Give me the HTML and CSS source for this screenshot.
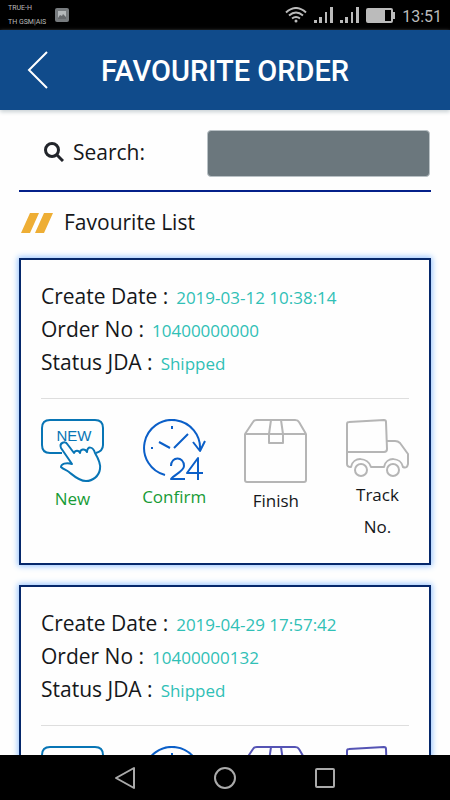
FILE: index.html
```html
<!DOCTYPE html>
<html lang="en">
<head>
<meta charset="utf-8">
<meta name="viewport" content="width=device-width, initial-scale=1">
<title>Favourite Order</title>
<link rel="stylesheet" href="styles.css">
</head>
<body>
<svg class="sprite" aria-hidden="true">
  <symbol id="i-new" viewBox="0 0 63 64">
    <path d="M21 34H9q-8 0-8-8V9q0-8 8-8h45q8 0 8 8v17q0 6-7 8"/>
    <path d="M20 29c-2-5 4-8 7-3l6 8c1-3 5-3 6 0 0-4 5-5 7-1 0-6 6-6 8 1 3 5 6 11 5 16-1 7-7 12-14 12-7 0-12-5-17-9-3-2-6-3-8-5 0-3 5-5 11-3z"/>
    <text x="33" y="22" text-anchor="middle">NEW</text>
  </symbol>
  <symbol id="i-clock" viewBox="0 0 63 62">
    <path d="M22 56A28 28 0 1 1 57 31M50 23l7 9 5-10M29 7v3M8 29h2M16 23l11 6M31 29l14-14"/>
    <path d="M28 47c0-10 13-10 13 0 0 5-10 9-13 13h14M55 61V39L44 54h16"/>
  </symbol>
  <symbol id="i-box" viewBox="0 0 63 66">
    <path d="M1 15h61v46q0 2-2 2H3q-2 0-2-2zL9 3q1-2 4-2h38q3 0 4 2l7 12M27 1l-2 14v9h14v-9L37 1"/>
  </symbol>
  <symbol id="i-truck" viewBox="0 0 63 60">
    <path d="M1 33V5q0-2 2-2l35-2q2 0 2 2l1 27q0 3-3 3zv12q0 3 4 3C7 37 22 38 25 48h13C40 37 55 38 57 48q4 2 5-3V35L54 24q-2-2-5-2h-8"/>
    <circle cx="15" cy="51" r="6"/><circle cx="47" cy="51" r="6"/>
  </symbol>
  <symbol id="i-signal" viewBox="0 0 19 16">
    <path d="M0 13h3v3H0zM5 10h3v6H5zM11 5h2v11h-2zM16 0h3v16h-3z"/>
  </symbol>
</svg>

<div class="status">
  <div class="carrier"><div>TRUE-H</div><div>TH GSM|AIS</div></div>
  <svg class="shot" viewBox="0 0 14 14"><rect width="14" height="14" rx="2" fill="#777b7e"/><rect x="3" y="3" width="8" height="8" fill="#b5b9bb"/><path d="M3 10l2-3 2 1 1-2 3 3v2H3z" fill="#66696c"/></svg>
  <svg class="wifi" viewBox="0 0 22 16"><path d="M1 5.500q10-9 20 0M4 8.500q7-6 14 0M7 11.500q4-3 8 0"/><circle cx="11" cy="14" r="1.500"/></svg>
  <svg class="signal" viewBox="0 0 19 16"><use href="#i-signal"/></svg>
  <svg class="signal" viewBox="0 0 19 16"><use href="#i-signal"/></svg>
  <svg class="battery" viewBox="0 0 29 15"><rect x="1" y="1" width="25" height="13" rx="1" fill="none" stroke="#bbb" stroke-width="2"/><path d="M2 2h17v11H2zM26 4h3v7h-3z" fill="#bbb"/></svg>
  <time>13:51</time>
</div>

<header class="bar">
  <button class="back" aria-label="Back"><svg viewBox="0 0 22 40"><path d="M20 2L2 20l18 18"/></svg></button>
  <h1>FAVOURITE ORDER</h1>
</header>

<main>
  <form class="search">
    <label for="q"><svg viewBox="0 0 20 20"><circle cx="8" cy="8" r="6.500"/><path d="M13 13l6 6"/></svg>Search:</label>
    <input id="q" type="search">
  </form>
  <h2><svg viewBox="0 0 32 20"><path d="M9 0h9L9 20H0zM23 0h9l-9 20h-9z"/></svg>Favourite List</h2>

  <article class="card">
    <dl>
      <div><dt>Create Date :</dt><dd>2019-03-12 10:38:14</dd></div>
      <div><dt>Order No :</dt><dd>10400000000</dd></div>
      <div><dt>Status JDA :</dt><dd>Shipped</dd></div>
    </dl>
    <div class="steps">
      <button class="done"><svg class="new" viewBox="0 0 63 64"><use href="#i-new"/></svg>New</button>
      <button class="done"><svg class="clock" viewBox="0 0 63 62"><use href="#i-clock"/></svg>Confirm</button>
      <button><svg viewBox="0 0 63 66"><use href="#i-box"/></svg>Finish</button>
      <button><svg viewBox="0 0 63 60"><use href="#i-truck"/></svg>Track No.</button>
    </div>
  </article>

  <article class="card">
    <dl>
      <div><dt>Create Date :</dt><dd>2019-04-29 17:57:42</dd></div>
      <div><dt>Order No :</dt><dd>10400000132</dd></div>
      <div><dt>Status JDA :</dt><dd>Shipped</dd></div>
    </dl>
    <div class="steps">
      <button class="done"><svg class="new" viewBox="0 0 63 64"><use href="#i-new"/></svg>New</button>
      <button class="done"><svg class="clock" viewBox="0 0 63 62"><use href="#i-clock"/></svg>Confirm</button>
      <button><svg class="active" viewBox="0 0 63 66"><use href="#i-box"/></svg>Finish</button>
      <button><svg class="active" viewBox="0 0 63 60"><use href="#i-truck"/></svg>Track No.</button>
    </div>
  </article>
</main>

<nav>
  <button aria-label="Back"><svg viewBox="0 0 24 24"><path d="M21 2v20L3 12z"/></svg></button>
  <button aria-label="Home"><svg viewBox="0 0 24 24"><circle cx="12" cy="12" r="10"/></svg></button>
  <button aria-label="Recent apps"><svg viewBox="0 0 24 24"><rect x="3" y="3" width="18" height="18" rx="1"/></svg></button>
</nav>
</body>
</html>
```

FILE: styles.css
```css
* { box-sizing: border-box; }

body {
  margin: 0;
  height: 100vh;
  display: flex;
  flex-direction: column;
  background: #fefefe;
  color: #15171a;
  font-family: "Open Sans", "Noto Sans", sans-serif;
}

button {
  padding: 0;
  border: 0;
  background: none;
  color: inherit;
  font: inherit;
}

svg { display: block; flex: none; }

.sprite { position: absolute; width: 0; height: 0; }

.status {
  flex: none;
  height: 30px;
  padding: 0 8px;
  display: flex;
  align-items: center;
  gap: 7px;
  background: #000;
  color: #bbb;
  font-family: Roboto, sans-serif;
}

.carrier { width: 40px; font-size: 7px; line-height: 14px; white-space: nowrap; }
.shot { width: 14px; height: 14px; margin-right: auto; }
.wifi { width: 22px; height: 16px; fill: #bbb; }
.wifi path { fill: none; stroke: #bbb; stroke-width: 2; }
.signal { width: 19px; height: 16px; fill: #bbb; }
.battery { width: 29px; height: 15px; }
.status time { font-size: 16px; line-height: 26px; padding-top: 4px; }

.bar {
  flex: none;
  height: 80px;
  padding: 0 27px;
  display: grid;
  grid-template-columns: 22px 1fr 22px;
  align-items: center;
  background: #104b8b;
  color: #fff;
  box-shadow: 0 2px 4px #c8d0d4;
}

.back svg {
  width: 22px;
  height: 40px;
  fill: none;
  stroke: #fff;
  stroke-width: 2;
}

h1 {
  margin: 0;
  padding-top: 2px;
  font-family: Roboto, sans-serif;
  font-size: 29px;
  font-weight: 500;
  line-height: 40px;
  text-align: center;
  white-space: nowrap;
}

main {
  flex: 1;
  min-height: 0;
  overflow: hidden;
  padding: 20px 19px 0;
}

.search {
  display: grid;
  grid-template-columns: 188px 1fr;
  padding: 0 1px 13px 0;
  border-bottom: 2px solid #04208a;
}

.search label {
  display: flex;
  align-items: center;
  gap: 9px;
  padding: 0 0 4px 25px;
  font-size: 21px;
}

.search label svg {
  width: 20px;
  height: 20px;
  fill: none;
  stroke: #22252b;
  stroke-width: 3;
}

.search input {
  min-width: 0;
  height: 47px;
  border: 1px solid #b9c1c5;
  border-radius: 4px;
  background: #6b777d;
}

h2 {
  display: flex;
  align-items: center;
  gap: 11px;
  margin: 15px 0 20px;
  padding-left: 2px;
  font-size: 21px;
  font-weight: 400;
  line-height: 31px;
}

h2 svg { width: 32px; height: 20px; fill: #eeae35; }

.card {
  margin-bottom: 20px;
  padding: 21px 20px 20px;
  border: 2px solid #06286b;
  box-shadow: 0 0 6px 1px #8fc0ff;
}

dl {
  display: flex;
  flex-direction: column;
  gap: 1px;
  margin: 0 0 20px;
  padding-bottom: 19px;
  border-bottom: 1px solid #dedede;
}

dl div {
  display: flex;
  align-items: baseline;
  gap: 8px;
  line-height: 31px;
}

dt { font-size: 21px; }
dd { margin: 0; font-size: 17px; color: #30c0b6; }

.steps {
  display: flex;
  justify-content: space-between;
  align-items: flex-start;
}

.steps button {
  width: 63px;
  font-size: 17px;
  line-height: 32px;
  display: flex;
  flex-direction: column;
  align-items: center;
}

.steps .done { color: #179b36; }

.steps svg {
  width: 63px;
  fill: none;
  stroke: #b5b5b5;
  stroke-width: 2;
  stroke-linejoin: round;
}

.steps .new { stroke: #0875b5; }
.steps .clock { stroke: #0b5fc8; }
.steps .active { stroke: #5554b4; }

symbol text {
  font: 15px "Liberation Sans", sans-serif;
  fill: #0875b5;
  stroke: none;
}

nav {
  flex: none;
  height: 45px;
  display: flex;
  justify-content: center;
  align-items: center;
  gap: 76px;
  background: #000;
}

nav svg {
  width: 24px;
  height: 24px;
  fill: none;
  stroke: #aaa;
  stroke-width: 2;
  stroke-linejoin: round;
}
```
